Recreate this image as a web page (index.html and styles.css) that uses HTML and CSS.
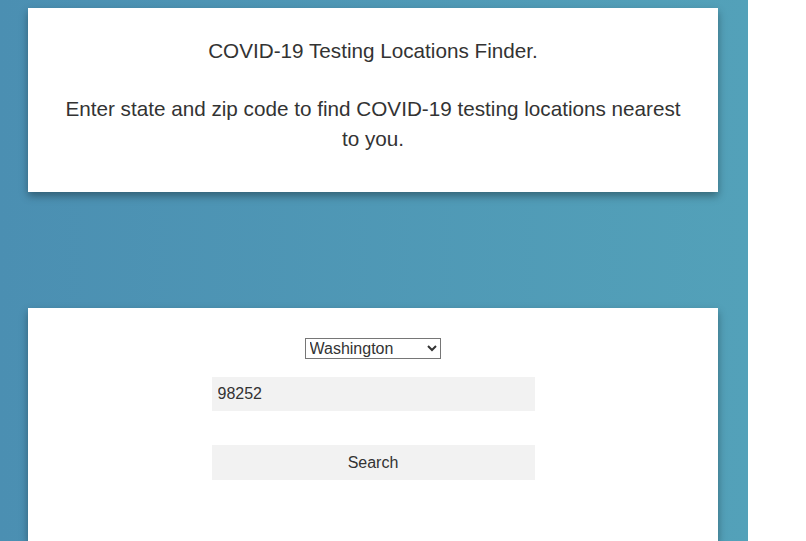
FILE: index.html
```html
<!DOCTYPE html>
<html>
<head>
<meta charset="utf-8">
<link rel="stylesheet" href="styles.css">
</head>
<body>
<div class="panel">
  <div class="card intro">
    <p class="title">COVID-19 Testing Locations Finder.</p>
    <p class="desc">Enter state and zip code to find COVID-19 testing locations nearest to you.</p>
  </div>
  <div class="card form">
    <select class="state">
      <option>Washington</option>
    </select>
    <input class="zip" type="text" value="98252">
    <button class="search">Search</button>
  </div>
</div>
</body>
</html>
```
FILE: styles.css
```css
html, body {
  margin: 0;
  padding: 0;
  background: #ffffff;
  height: 100%;
  overflow: hidden;
}
body {
  font-family: "Liberation Sans", Arial, sans-serif;
  color: #333333;
}
.panel {
  width: 748px;
  height: 100%;
  box-sizing: border-box;
  padding: 8px 30px 0 28px;
  background: linear-gradient(to right, #4b8fb2, #53a1b9);
  display: flex;
  flex-direction: column;
  gap: 116px;
}
.card {
  background: #ffffff;
  box-shadow: 0 4px 8px rgba(0, 0, 0, 0.35);
  width: 690px;
  box-sizing: border-box;
}
.intro {
  padding: 28px 32px 38px;
  text-align: center;
  font-size: 20.7px;
  line-height: 30px;
}
.intro p {
  margin: 0;
}
.intro .desc {
  margin-top: 28px;
}
.form {
  flex: 1;
  display: flex;
  flex-direction: column;
  align-items: center;
  padding-top: 30px;
}
.state {
  font-family: "Liberation Sans", Arial, sans-serif;
  font-size: 16px;
  width: 136px;
  height: 21px;
  color: #333333;
  border: 1px solid #767676;
  border-radius: 0;
  background: #ffffff;
  margin-right: 1px;
}
.zip {
  margin-top: 18px;
  width: 323px;
  height: 34px;
  box-sizing: border-box;
  border: none;
  background: #f2f2f2;
  font-family: "Liberation Sans", Arial, sans-serif;
  font-size: 16px;
  color: #333333;
  padding: 0 6px;
  outline: none;
}
.search {
  margin-top: 34px;
  width: 323px;
  height: 35px;
  padding-top: 2px;
  border: none;
  background: #f2f2f2;
  font-family: "Liberation Sans", Arial, sans-serif;
  font-size: 16px;
  color: #333333;
}
```
